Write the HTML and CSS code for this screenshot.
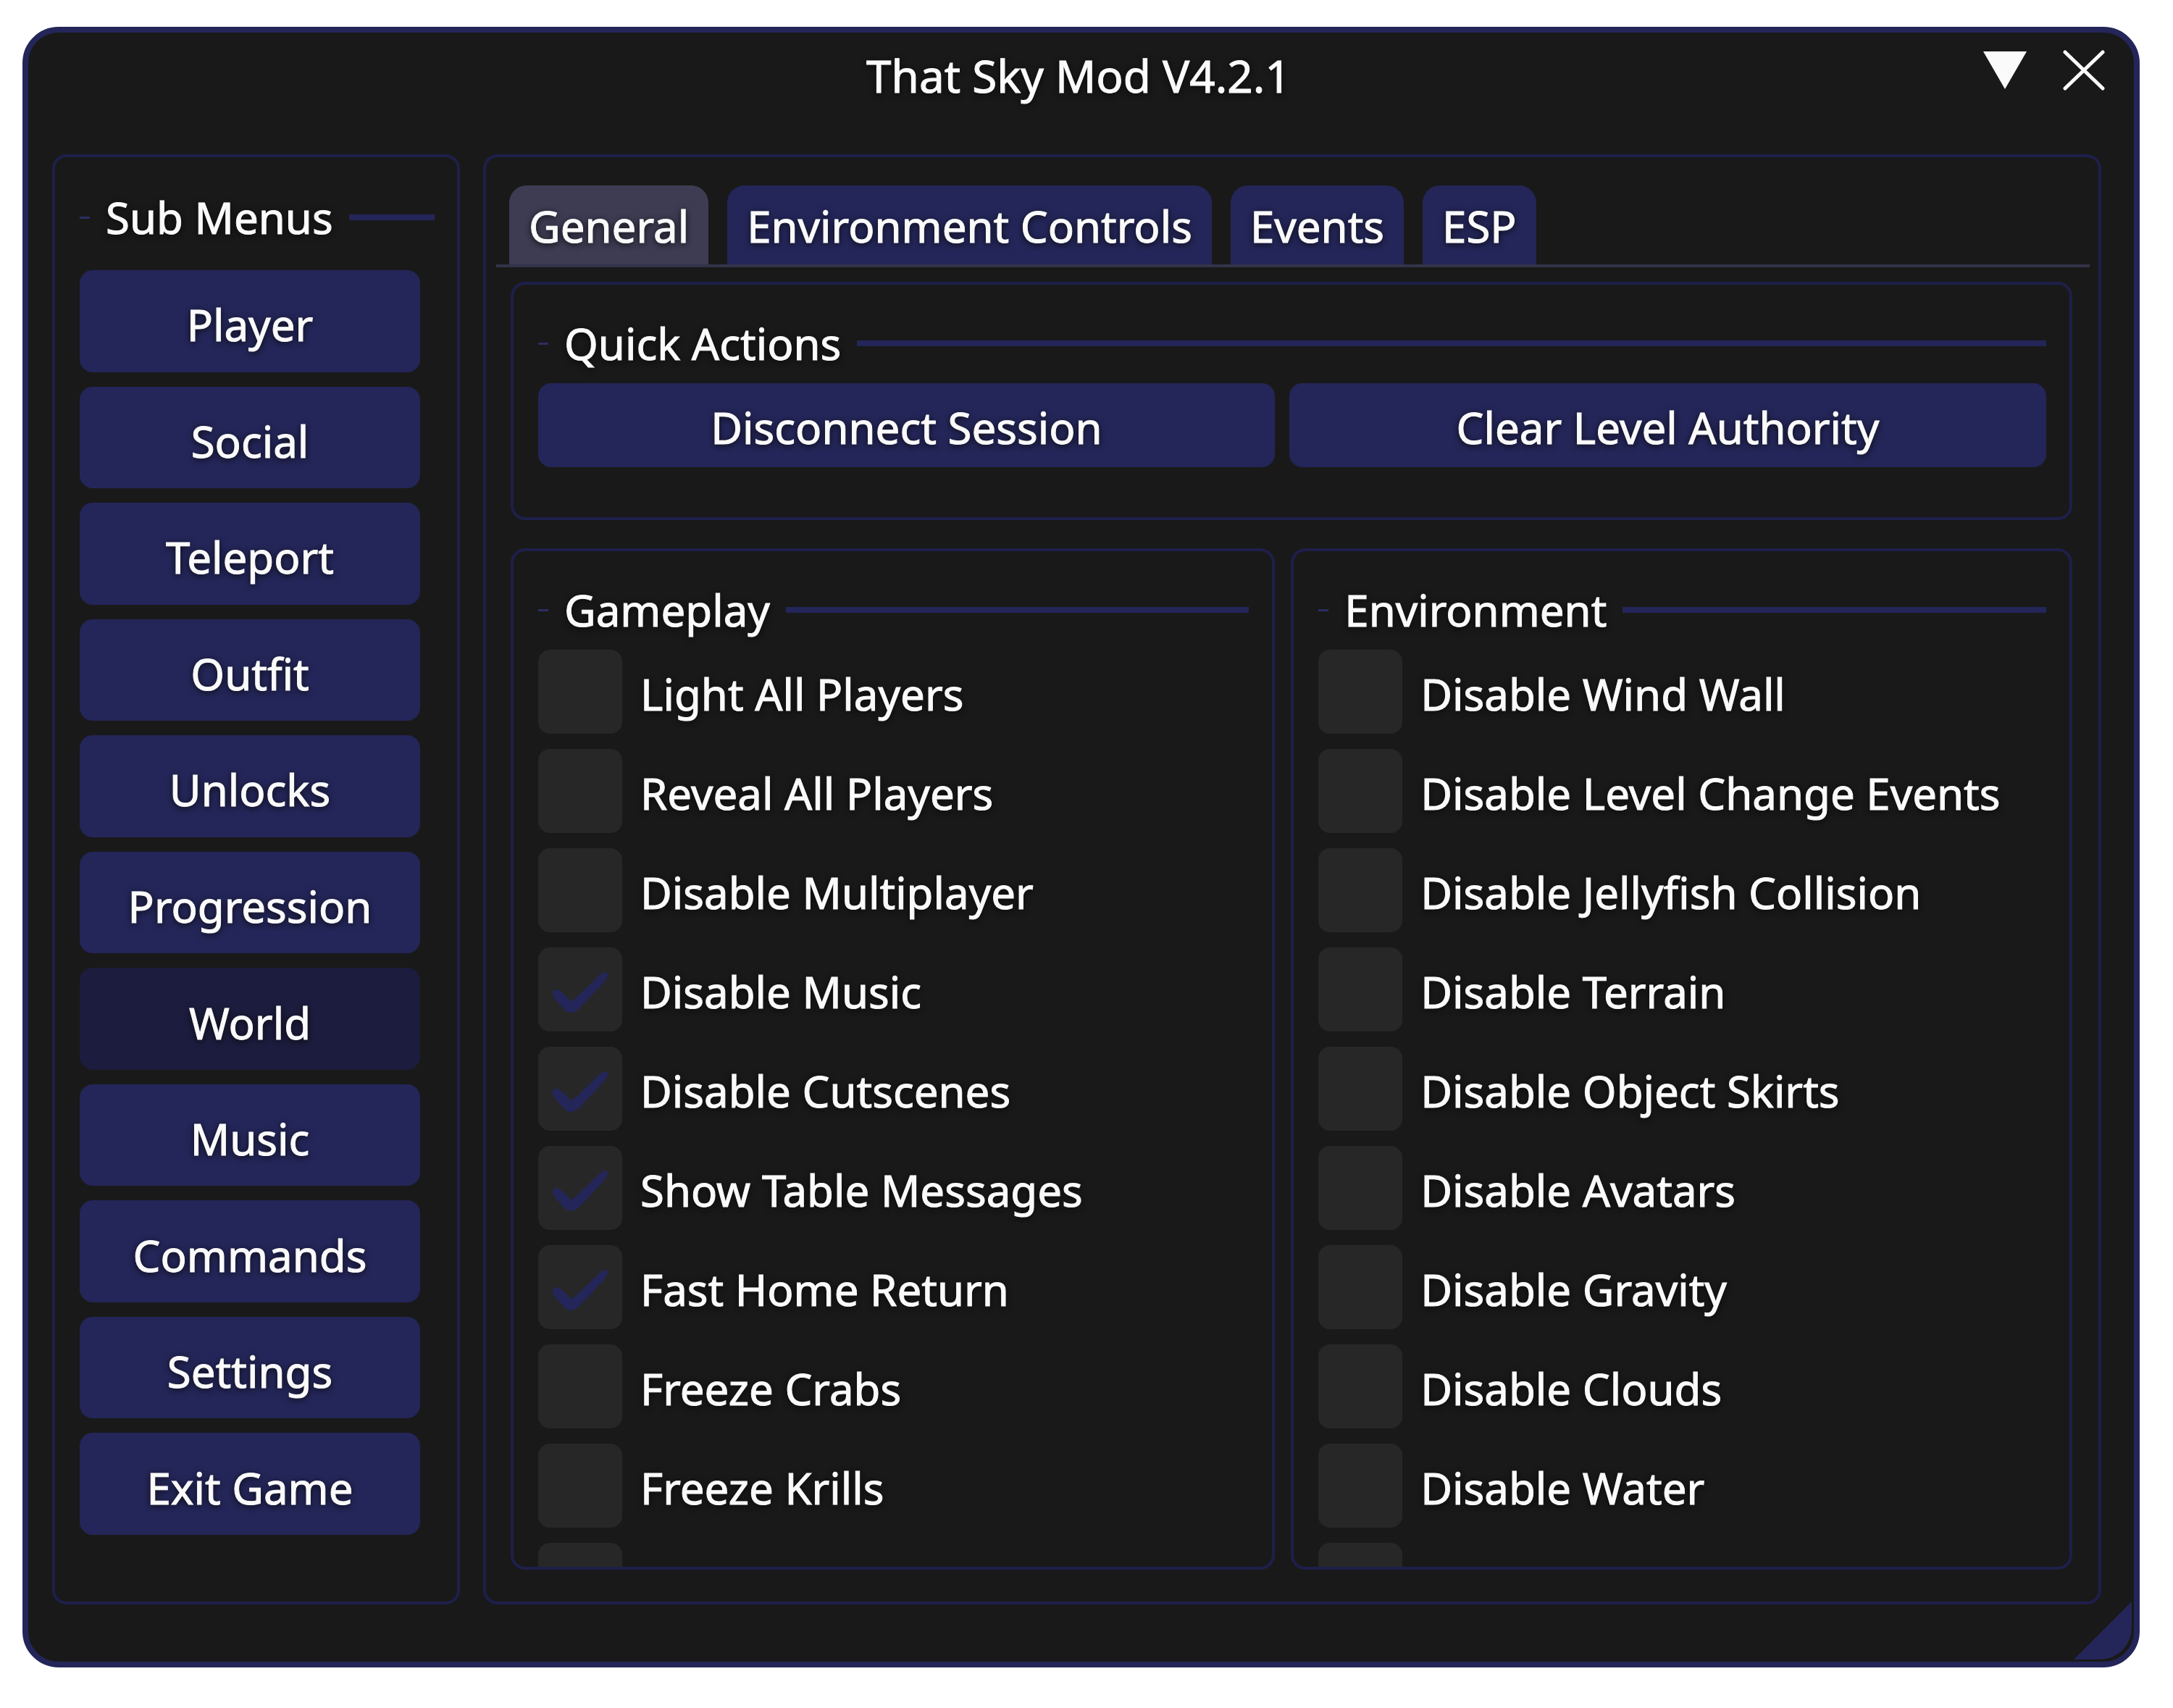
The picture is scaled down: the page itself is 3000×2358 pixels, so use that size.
FILE: index.html
```html
<!DOCTYPE html>
<html lang="en">
<head>
<meta charset="utf-8">
<title>That Sky Mod V4.2.1</title>
<link rel="stylesheet" href="styles.css">
</head>
<body>
<div class="window">
  <header class="titlebar">
    <h1 class="title">That Sky Mod V4.2.1</h1>
    <div class="controls">
      <button class="control" type="button" aria-label="Collapse">
        <svg width="60" height="54" viewBox="0 0 60 54"><path d="M0 1H60L30 53Z" fill="#fafafa"/></svg>
      </button>
      <button class="control" type="button" aria-label="Close">
        <svg width="58" height="56" viewBox="0 0 58 56"><path d="M3 3L55 53M55 3L3 53" stroke="#fafafa" stroke-width="5" stroke-linecap="round"/></svg>
      </button>
    </div>
  </header>
  <div class="body">
    <aside class="panel sidebar">
      <h2 class="separator">Sub Menus</h2>
      <nav class="menu">
        <button class="button" type="button">Player</button>
        <button class="button" type="button">Social</button>
        <button class="button" type="button">Teleport</button>
        <button class="button" type="button">Outfit</button>
        <button class="button" type="button">Unlocks</button>
        <button class="button" type="button">Progression</button>
        <button class="button current" type="button">World</button>
        <button class="button" type="button">Music</button>
        <button class="button" type="button">Commands</button>
        <button class="button" type="button">Settings</button>
        <button class="button" type="button">Exit Game</button>
      </nav>
    </aside>
    <main class="panel main">
      <div class="tabs" role="tablist">
        <button class="tab selected" type="button" role="tab" aria-selected="true">General</button>
        <button class="tab" type="button" role="tab">Environment Controls</button>
        <button class="tab" type="button" role="tab">Events</button>
        <button class="tab" type="button" role="tab">ESP</button>
      </div>
      <div class="content">
        <section class="panel group quick">
          <h2 class="separator">Quick Actions</h2>
          <div class="actions">
            <button class="button" type="button">Disconnect Session</button>
            <button class="button" type="button">Clear Level Authority</button>
          </div>
        </section>
        <div class="columns">
          <section class="panel group">
            <h2 class="separator">Gameplay</h2>
            <div class="options">
              <label class="option"><input class="box" type="checkbox"><span class="name">Light All Players</span></label>
              <label class="option"><input class="box" type="checkbox"><span class="name">Reveal All Players</span></label>
              <label class="option"><input class="box" type="checkbox"><span class="name">Disable Multiplayer</span></label>
              <label class="option"><input class="box" type="checkbox" checked><span class="name">Disable Music</span></label>
              <label class="option"><input class="box" type="checkbox" checked><span class="name">Disable Cutscenes</span></label>
              <label class="option"><input class="box" type="checkbox" checked><span class="name">Show Table Messages</span></label>
              <label class="option"><input class="box" type="checkbox" checked><span class="name">Fast Home Return</span></label>
              <label class="option"><input class="box" type="checkbox"><span class="name">Freeze Crabs</span></label>
              <label class="option"><input class="box" type="checkbox"><span class="name">Freeze Krills</span></label>
              <label class="option"><input class="box" type="checkbox"></label>
            </div>
          </section>
          <section class="panel group">
            <h2 class="separator">Environment</h2>
            <div class="options">
              <label class="option"><input class="box" type="checkbox"><span class="name">Disable Wind Wall</span></label>
              <label class="option"><input class="box" type="checkbox"><span class="name">Disable Level Change Events</span></label>
              <label class="option"><input class="box" type="checkbox"><span class="name">Disable Jellyfish Collision</span></label>
              <label class="option"><input class="box" type="checkbox"><span class="name">Disable Terrain</span></label>
              <label class="option"><input class="box" type="checkbox"><span class="name">Disable Object Skirts</span></label>
              <label class="option"><input class="box" type="checkbox"><span class="name">Disable Avatars</span></label>
              <label class="option"><input class="box" type="checkbox"><span class="name">Disable Gravity</span></label>
              <label class="option"><input class="box" type="checkbox"><span class="name">Disable Clouds</span></label>
              <label class="option"><input class="box" type="checkbox"><span class="name">Disable Water</span></label>
              <label class="option"><input class="box" type="checkbox"></label>
            </div>
          </section>
        </div>
      </div>
    </main>
  </div>
  <div class="resize"></div>
</div>
</body>
</html>
```

FILE: styles.css
```css
:root {
  --bg: #191919;
  --accent: #242659;
  --line: #1e1f4a;
  --text: #fafafa;
}

* {
  box-sizing: border-box;
}

body {
  display: flex;
  height: 100vh;
  margin: 0;
  padding: 37px 46px 56px 31px;
  background: #fff;
  color: var(--text);
  font: 60px/86px "Noto Sans", sans-serif;
  text-shadow: 0 2px 10px #080808;
  -webkit-text-stroke: 1px var(--text);
}

button {
  border: 0;
  padding: 0;
  background: none;
  color: inherit;
  font: inherit;
  text-shadow: inherit;
}

.window {
  position: relative;
  display: flex;
  flex: 1;
  flex-direction: column;
  min-width: 0;
  padding: 0 45px 79px 33px;
  border: 8px solid var(--accent);
  border-radius: 50px;
  background: var(--bg);
}

.titlebar {
  display: grid;
  grid-template-columns: 1fr auto 1fr;
  height: 168px;
  margin-right: -5px;
  padding-top: 16px;
}

.title {
  grid-column: 2;
  margin: 0;
  font-size: 62px;
  font-weight: 400;
}

.controls {
  display: flex;
  gap: 50px;
  align-items: center;
  justify-content: flex-end;
  height: 72px;
}

.control,
.control svg {
  display: block;
}

.body {
  display: flex;
  flex: 1;
  gap: 32px;
  min-height: 0;
}

.panel {
  border: 4px solid var(--line);
  border-radius: 20px;
}

.sidebar {
  display: flex;
  flex: none;
  flex-direction: column;
  gap: 30px;
  width: 563px;
  padding: 40px 31px 92px 34px;
}

.separator {
  display: flex;
  gap: 22px;
  align-items: center;
  margin: 0;
  font-size: inherit;
  font-weight: 400;
}

.separator::before {
  width: 14px;
  height: 3px;
  background: #2c2e62;
  content: "";
}

.separator::after {
  flex: 1;
  height: 8px;
  background: var(--accent);
  content: "";
}

.menu {
  display: grid;
  flex: 1;
  grid-auto-rows: 1fr;
  gap: 20px;
  margin-right: 20px;
}

.button {
  border-radius: 18px;
  background: var(--accent);
}

.menu .button {
  padding-top: 10px;
}

.button.current {
  background: #1c1c3e;
}

.main {
  display: flex;
  flex: 1;
  flex-direction: column;
  gap: 20px;
  min-width: 0;
  padding: 39px 0 44px;
}

.tabs {
  display: flex;
  gap: 26px;
  margin: 0 12px 0 14px;
  padding-left: 18px;
  border-bottom: 4px solid #33334a;
}

.tab {
  height: 109px;
  padding: 2px 27px 0;
  border-radius: 24px 24px 0 0;
  background: var(--accent);
}

.tab.selected {
  background: #3d3c53;
}

.content {
  display: flex;
  flex: 1;
  flex-direction: column;
  gap: 39px;
  min-height: 0;
  padding: 0 36px 0 34px;
}

.group {
  display: flex;
  flex-direction: column;
  gap: 12px;
  min-height: 0;
  padding: 38px 32px 0 34px;
  overflow: hidden;
}

.quick {
  flex: none;
  padding-bottom: 69px;
}

.actions,
.columns {
  display: grid;
  grid-template-columns: 36fr 37fr;
  gap: 20px;
}

.actions .button {
  height: 116px;
  padding-top: 6px;
}

.columns {
  flex: 1;
  grid-template-columns: 45fr 46fr;
  grid-template-rows: minmax(0, 1fr);
  gap: 22px;
  min-height: 0;
}

.options {
  display: flex;
  flex-direction: column;
  gap: 21px;
}

.option {
  display: flex;
  flex: none;
  gap: 25px;
  align-items: center;
}

.box {
  flex: none;
  width: 116px;
  height: 116px;
  margin: 0;
  border-radius: 16px;
  background: #272727;
  appearance: none;
}

.box:checked::before {
  display: block;
  width: 116px;
  height: 116px;
  background: var(--accent);
  clip-path: path("M20 64Q20 56 29 59Q34 62 45 74Q49 73 56 66L86 37Q94 32 96 36Q97 40 91 48L56 85Q50 90 45 90Q40 90 36 86L24 72Q20 68 20 64Z");
  content: "";
}

.name {
  padding-top: 6px;
}

/* Resize grip, tucked into the window's rounded corner */
.resize {
  position: absolute;
  right: 3px;
  bottom: 3px;
  width: 80px;
  height: 80px;
  border-bottom-right-radius: 44px;
  background: var(--accent);
  clip-path: polygon(100% 0, 100% 100%, 0 100%);
}
```
